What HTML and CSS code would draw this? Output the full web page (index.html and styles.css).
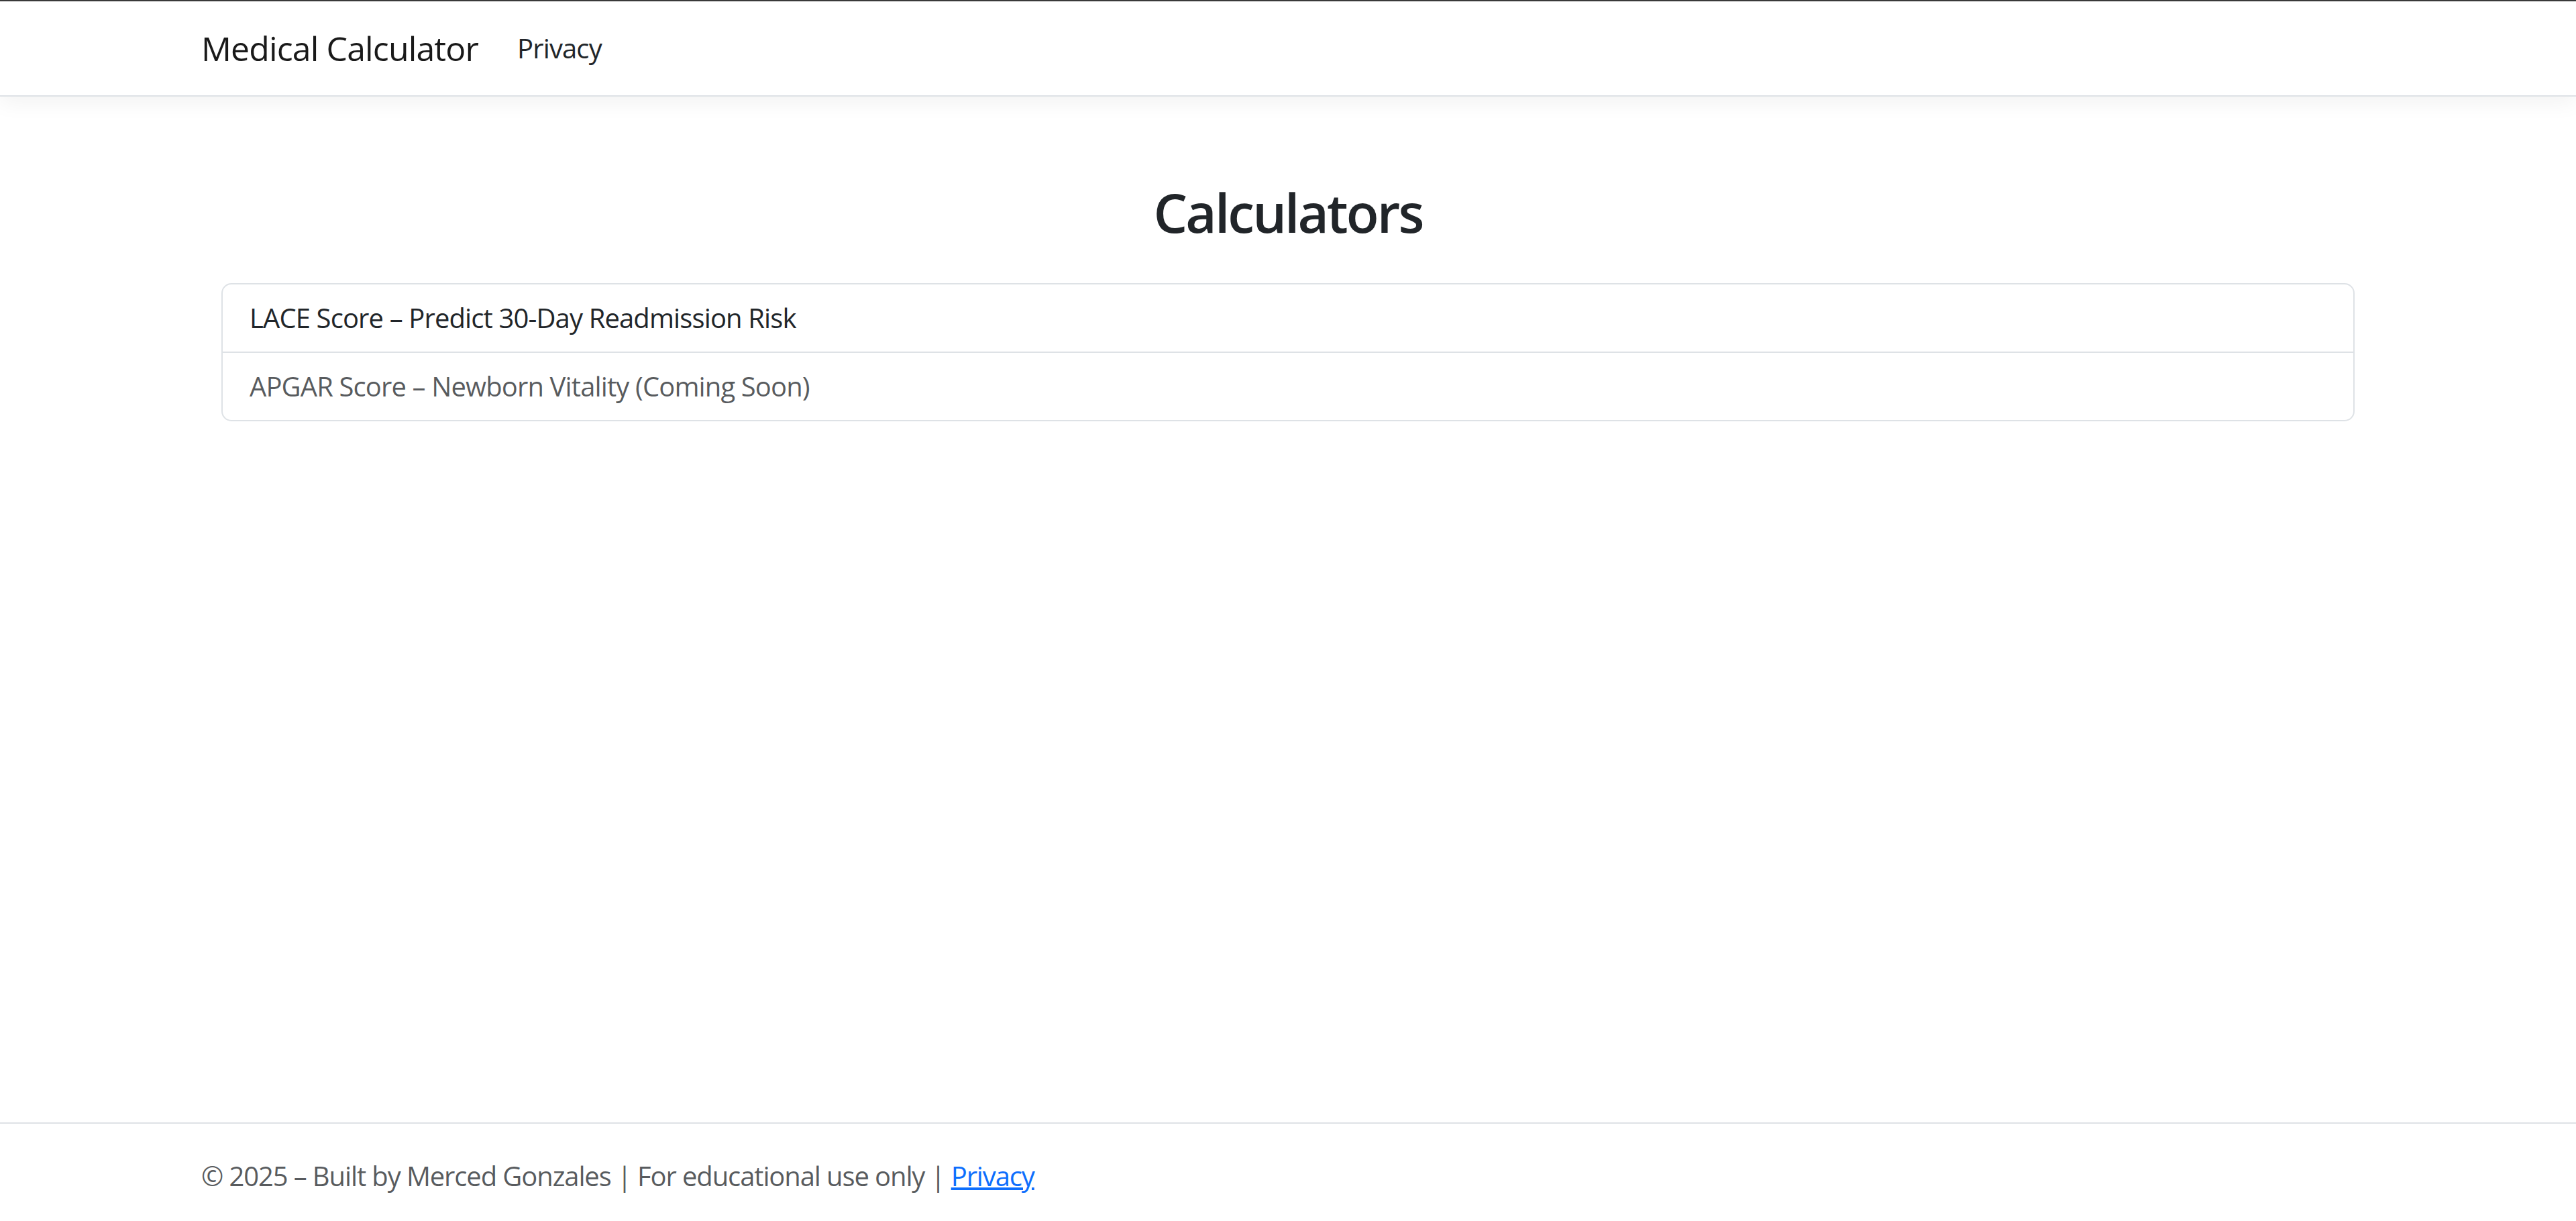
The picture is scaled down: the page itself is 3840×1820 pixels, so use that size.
FILE: index.html
```html
<!DOCTYPE html>
<html lang="en">
<head>
<meta charset="utf-8">
<title>Calculators - Medical Calculator</title>
<link rel="stylesheet" href="styles.css">
</head>
<body>
<header class="site-header">
  <nav class="navbar">
    <div class="container nav-inner">
      <a class="brand" href="#">Medical Calculator</a>
      <ul class="nav-list">
        <li><a class="nav-link" href="#">Privacy</a></li>
      </ul>
    </div>
  </nav>
</header>
<div class="container page">
  <main class="main">
    <div class="inner">
      <h1 class="title">Calculators</h1>
      <div class="list-group">
        <a class="list-item" href="#">LACE Score – Predict 30-Day Readmission Risk</a>
        <span class="list-item muted">APGAR Score – Newborn Vitality (Coming Soon)</span>
      </div>
    </div>
  </main>
</div>
<footer class="footer">
  <div class="container">
    © 2025 – Built by Merced Gonzales | For educational use only | <a class="footer-link" href="#">Privacy</a>
  </div>
</footer>
</body>
</html>
```
FILE: styles.css
```css
* { box-sizing: border-box; }
html, body { margin: 0; padding: 0; }
body {
  font-family: "Open Sans", "Noto Sans", "Liberation Sans", sans-serif;
  font-size: 40px;
  line-height: 1.5;
  letter-spacing: -0.022em;
  color: #212529;
  background: #fff;
  min-height: 1820px;
  display: flex;
  flex-direction: column;
}
a { text-decoration: none; }
.container {
  width: 100%;
  max-width: 3300px;
  margin: 0 auto;
  padding: 0 30px;
}
.site-header { border-top: 2px solid #3a3a3a; }
.navbar {
  background: #fff;
  border-bottom: 2px solid #dee2e6;
  box-shadow: 0 10px 30px rgba(0,0,0,.05);
  padding: 20px 0;
  margin-bottom: 40px;
}
.nav-inner { display: flex; align-items: center; }
.brand {
  font-size: 50px;
  line-height: 75px;
  padding: 12.5px 0;
  margin-right: 38px;
  color: rgba(0,0,0,.9);
}
.nav-list { list-style: none; margin: 0; padding: 0; display: flex; }
.nav-link {
  display: block;
  padding: 20px;
  line-height: 60px;
  color: #212529;
}
.page { flex: 1; }
.main { padding-bottom: 40px; }
.inner { padding: 0 30px; }
.title {
  text-align: center;
  font-size: 80px;
  font-weight: 600;
  line-height: 96px;
  letter-spacing: -0.036em;
  margin: 84px 0 58px;
}
.list-group {
  border: 2px solid #dee2e6;
  border-radius: 15px;
  display: flex;
  flex-direction: column;
}
.list-item {
  display: block;
  padding: 20px 40px;
  line-height: 60px;
  color: #212529;
}
.list-item + .list-item { border-top: 2px solid #dee2e6; }
.muted { color: rgba(33,37,41,.75); }
.footer {
  border-top: 2px solid #dee2e6;
  padding-top: 10px;
  line-height: 135px;
  white-space: nowrap;
  letter-spacing: -0.028em;
  color: rgba(33,37,41,.75);
}
.footer-link { color: #0d6efd; text-decoration: underline; }
```
